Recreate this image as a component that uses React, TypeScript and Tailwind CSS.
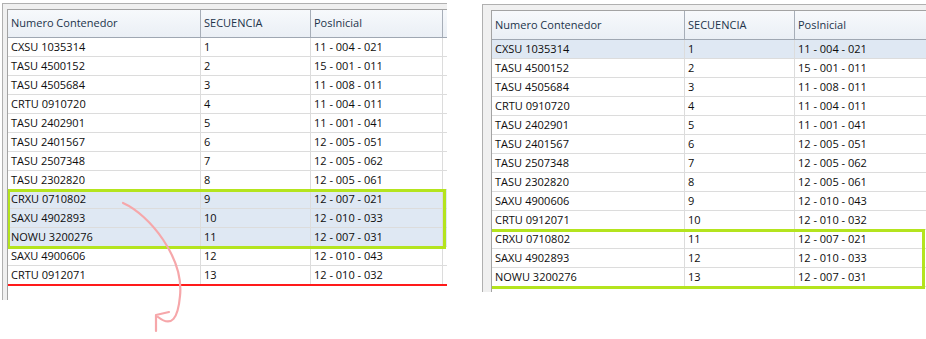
import React from "react";

type Row = [string, string, string];

const leftRows: Row[] = [
  ["CXSU 1035314", "1", "11 - 004 - 021"],
  ["TASU 4500152", "2", "15 - 001 - 011"],
  ["TASU 4505684", "3", "11 - 008 - 011"],
  ["CRTU 0910720", "4", "11 - 004 - 011"],
  ["TASU 2402901", "5", "11 - 001 - 041"],
  ["TASU 2401567", "6", "12 - 005 - 051"],
  ["TASU 2507348", "7", "12 - 005 - 062"],
  ["TASU 2302820", "8", "12 - 005 - 061"],
  ["CRXU 0710802", "9", "12 - 007 - 021"],
  ["SAXU 4902893", "10", "12 - 010 - 033"],
  ["NOWU 3200276", "11", "12 - 007 - 031"],
  ["SAXU 4900606", "12", "12 - 010 - 043"],
  ["CRTU 0912071", "13", "12 - 010 - 032"],
];

const rightRows: Row[] = [
  ["CXSU 1035314", "1", "11 - 004 - 021"],
  ["TASU 4500152", "2", "15 - 001 - 011"],
  ["TASU 4505684", "3", "11 - 008 - 011"],
  ["CRTU 0910720", "4", "11 - 004 - 011"],
  ["TASU 2402901", "5", "11 - 001 - 041"],
  ["TASU 2401567", "6", "12 - 005 - 051"],
  ["TASU 2507348", "7", "12 - 005 - 062"],
  ["TASU 2302820", "8", "12 - 005 - 061"],
  ["SAXU 4900606", "9", "12 - 010 - 043"],
  ["CRTU 0912071", "10", "12 - 010 - 032"],
  ["CRXU 0710802", "11", "12 - 007 - 021"],
  ["SAXU 4902893", "12", "12 - 010 - 033"],
  ["NOWU 3200276", "13", "12 - 007 - 031"],
];

function Grid({
  rows,
  selected,
  boxStart,
  headerH,
  redLine,
  boxLeft,
}: {
  rows: Row[];
  selected: number[];
  boxStart: number;
  headerH: string;
  redLine: boolean;
  boxLeft: number;
}) {
  return (
    <div className="flex-1 bg-white border-l border-t border-[#a3a3a3] overflow-hidden">
      <div
        className={`flex ${headerH} border-b border-[#9fa7b2] bg-gradient-to-b from-[#f7f9fc] to-[#eaeff5] text-[#22334a]`}
      >
        <div className="w-[193px] shrink-0 border-r border-[#a7aeb8] pl-[3px] flex items-center">
          Numero Contenedor
        </div>
        <div className="w-[110px] shrink-0 border-r border-[#a7aeb8] pl-[3px] flex items-center">
          SECUENCIA
        </div>
        <div className="w-[132px] shrink-0 border-r border-[#a7aeb8] pl-[3px] flex items-center">
          PosInicial
        </div>
        <div className="flex-1" />
      </div>
      <div className="relative">
        {rows.map((r, i) => (
          <div
            key={i}
            className={`flex h-[19px] border-b border-[#dcdcdc] ${
              selected.includes(i) ? "bg-[#dfe8f3]" : "bg-white"
            }`}
          >
            <div className="w-[193px] shrink-0 border-r border-[#dcdcdc] pl-[3px] flex items-center">
              {r[0]}
            </div>
            <div className="w-[110px] shrink-0 border-r border-[#dcdcdc] pl-[3px] flex items-center">
              {r[1]}
            </div>
            <div className="w-[132px] shrink-0 border-r border-[#dcdcdc] pl-[3px] flex items-center">
              {r[2]}
            </div>
            <div className="flex-1" />
          </div>
        ))}
        {redLine && <div className="h-[2px] bg-[#ff1a1a] -mt-[1px]" />}
        <div
          className="absolute right-[1px] h-[60px] border-[3px] border-[#b4e41e]"
          style={{ top: boxStart * 19 - 1, left: boxLeft }}
        />
      </div>
    </div>
  );
}

export default function App() {
  return (
    <div
      className="relative w-[926px] h-[339px] bg-white overflow-hidden text-[11px] text-[#0d0d0d]"
      style={{ fontFamily: '"Open Sans", "Noto Sans", sans-serif' }}
    >
      <div className="flex items-start">
        <div className="ml-[2px] mt-[3px] w-[445px] h-[297px] border-t border-l border-[#b0b0b0] bg-[#f0f0f0] pl-[4px] pt-[5px] flex">
          <Grid
            rows={leftRows}
            selected={[8, 9, 10]}
            boxStart={8}
            headerH="h-[28px]"
            redLine
            boxLeft={-1}
          />
        </div>
        <div className="ml-[35px] mt-[4px] w-[444px] h-[288px] border-t border-l border-[#b0b0b0] bg-[#f0f0f0] pl-[8px] pt-[5px] flex">
          <Grid
            rows={rightRows}
            selected={[0]}
            boxStart={10}
            headerH="h-[29px]"
            redLine={false}
            boxLeft={-4}
          />
        </div>
      </div>
      <svg
        className="absolute left-0 top-0 pointer-events-none"
        width="926"
        height="339"
        viewBox="0 0 926 339"
      >
        <path
          d="M123 203 C 150 215, 184 258, 180 296 C 178 318, 172 328, 158 317"
          fill="none"
          stroke="#f6a7aa"
          strokeWidth="2.2"
          strokeLinecap="round"
        />
        <path
          d="M169 312 L 156 315 L 156 331"
          fill="none"
          stroke="#f6a7aa"
          strokeWidth="2.2"
          strokeLinecap="round"
          strokeLinejoin="round"
        />
      </svg>
    </div>
  );
}
